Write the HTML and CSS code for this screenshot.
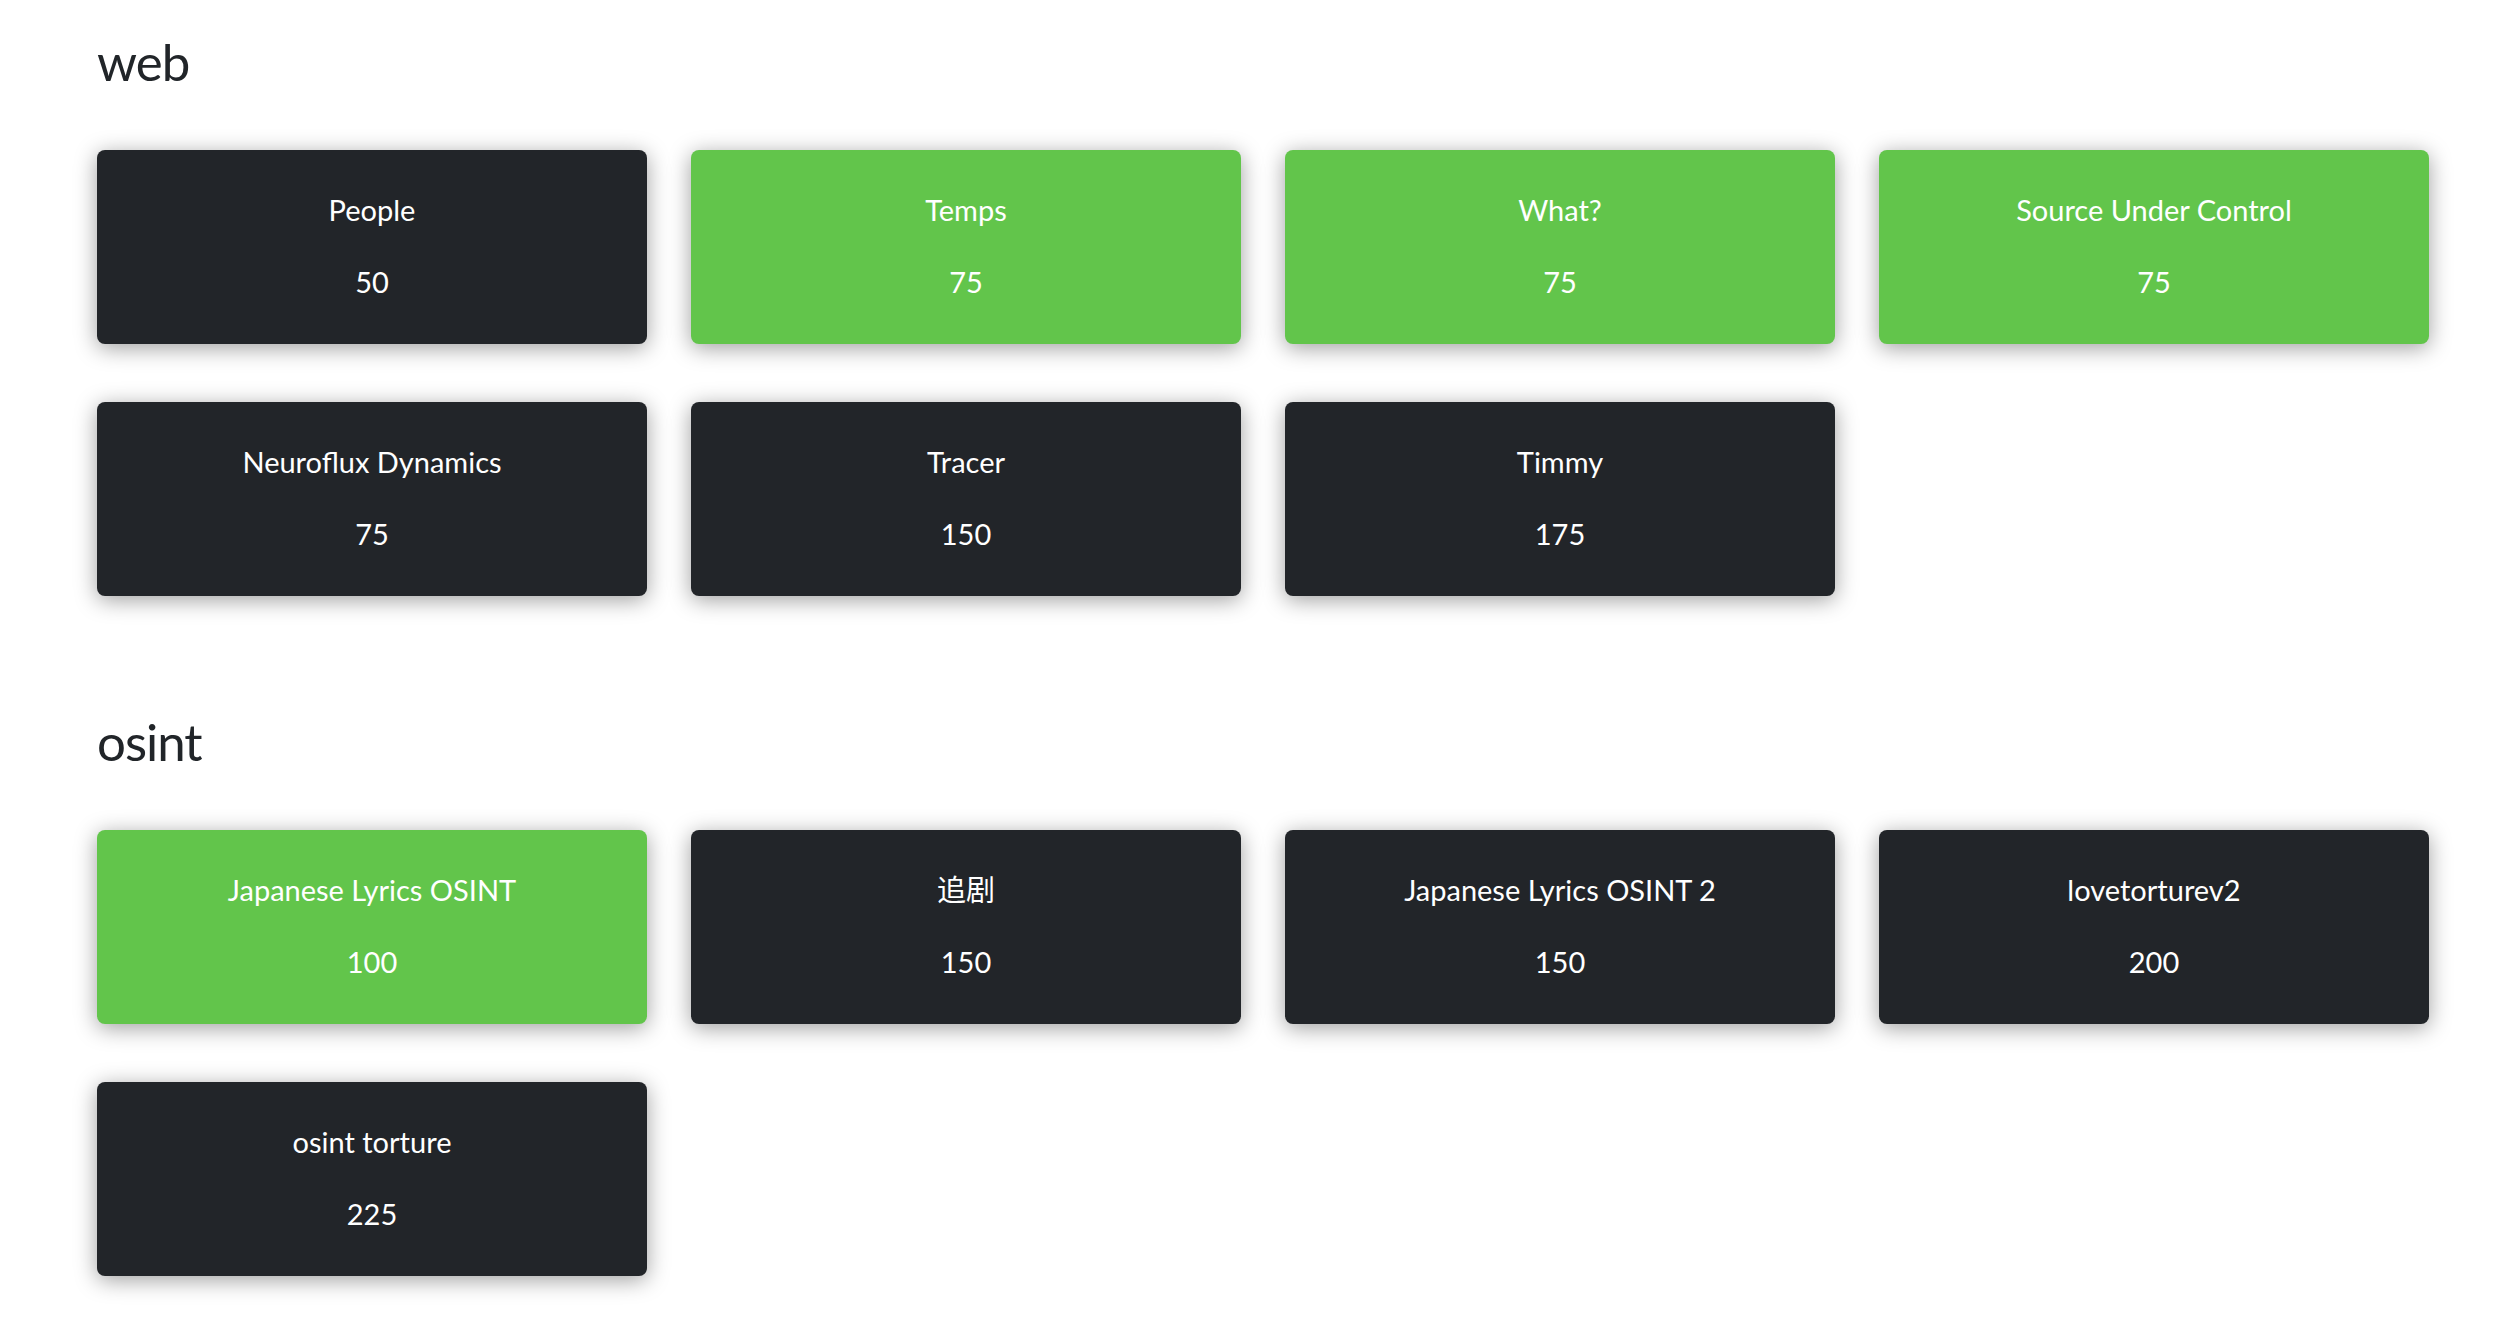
FILE: index.html
```html
<!DOCTYPE html>
<html lang="en">
<head>
<meta charset="utf-8">
<title>Challenges</title>
<link rel="stylesheet" href="styles.css">
</head>
<body>
<main class="page">
  <section class="category">
    <h2 class="category-title">web</h2>
    <div class="grid">
      <div class="card"><span class="card-name">People</span><span class="card-value">50</span></div>
      <div class="card solved"><span class="card-name">Temps</span><span class="card-value">75</span></div>
      <div class="card solved"><span class="card-name">What?</span><span class="card-value">75</span></div>
      <div class="card solved"><span class="card-name">Source Under Control</span><span class="card-value">75</span></div>
      <div class="card"><span class="card-name">Neuroflux Dynamics</span><span class="card-value">75</span></div>
      <div class="card"><span class="card-name">Tracer</span><span class="card-value">150</span></div>
      <div class="card"><span class="card-name">Timmy</span><span class="card-value">175</span></div>
    </div>
  </section>
  <section class="category">
    <h2 class="category-title">osint</h2>
    <div class="grid">
      <div class="card solved"><span class="card-name">Japanese Lyrics OSINT</span><span class="card-value">100</span></div>
      <div class="card"><span class="card-name">追剧</span><span class="card-value">150</span></div>
      <div class="card"><span class="card-name">Japanese Lyrics OSINT 2</span><span class="card-value">150</span></div>
      <div class="card"><span class="card-name">lovetorturev2</span><span class="card-value">200</span></div>
      <div class="card"><span class="card-name">osint torture</span><span class="card-value">225</span></div>
    </div>
  </section>
</main>
</body>
</html>
```
FILE: styles.css
```css
html, body {
  margin: 0;
  padding: 0;
  background: #ffffff;
}

body {
  font-family: Lato, "Noto Sans CJK SC", sans-serif;
  color: #212529;
}

.page {
  padding: 28px 89px 40px 97px;
}

.category + .category {
  margin-top: 112px;
}

.category-title {
  margin: 0 0 55px;
  font-size: 51px;
  line-height: 67px;
  letter-spacing: -1px;
  font-weight: 400;
  color: #212529;
}

.grid {
  display: grid;
  grid-template-columns: repeat(4, 550px);
  column-gap: 44px;
  row-gap: 58px;
}

.card {
  box-sizing: border-box;
  height: 194px;
  padding: 37px 0;
  display: flex;
  flex-direction: column;
  align-items: center;
  gap: 27px;
  background: #222529;
  color: #ffffff;
  border-radius: 8px;
  box-shadow: 0 4px 22px rgba(0, 0, 0, 0.38);
}

.card.solved {
  background: #62c54b;
}

.card-name,
.card-value {
  font-size: 29px;
  line-height: 45px;
  font-weight: 400;
}
```
